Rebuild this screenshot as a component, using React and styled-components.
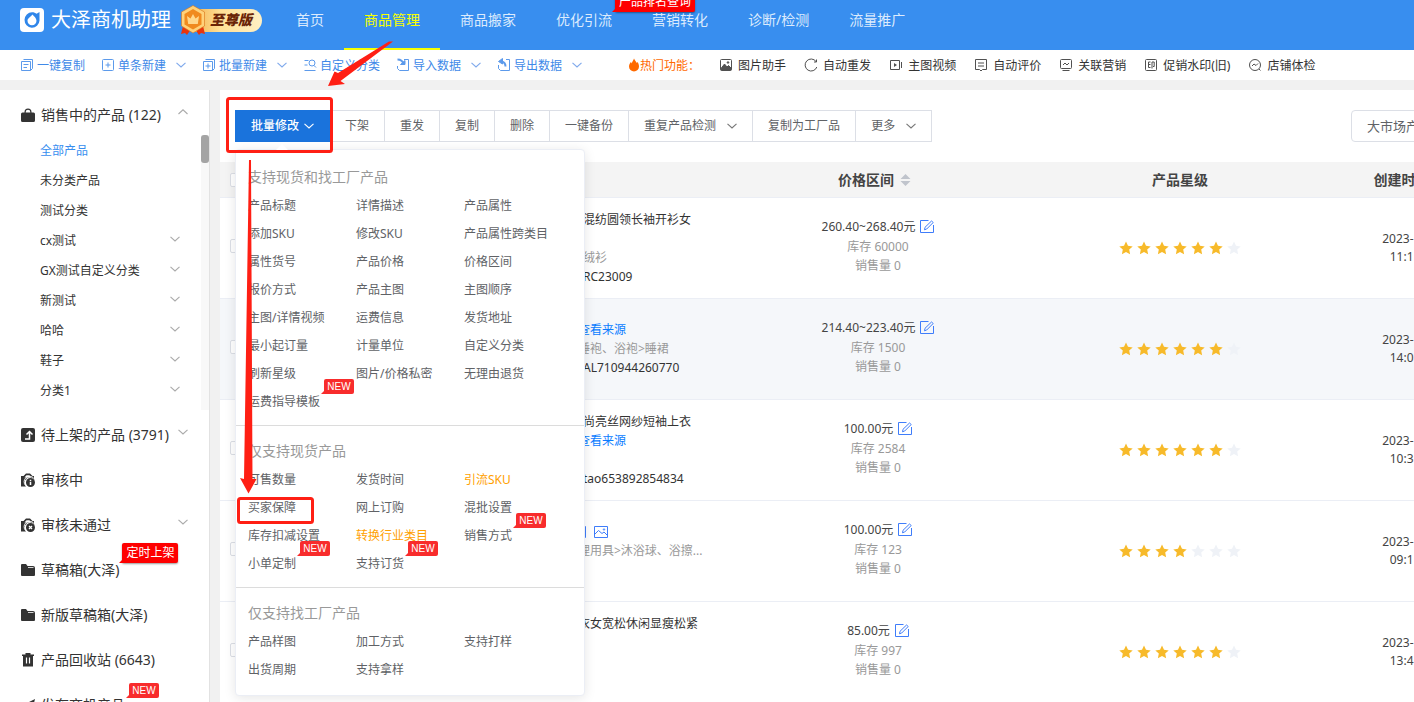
import React from 'react';
import styled, { createGlobalStyle, css } from 'styled-components';

const Global = createGlobalStyle`
  * { box-sizing: border-box; }
  body {
    margin: 0;
    background: #f1f1f1;
    color: #333;
    font: 12px/18px "Noto Sans", "Noto Sans CJK SC", sans-serif;
    overflow: hidden;
  }
  button { font: inherit; color: inherit; background: none; border: 0; padding: 0; cursor: pointer; }
  a { color: inherit; text-decoration: none; }
  ul { list-style: none; margin: 0; padding: 0; }
  svg { display: block; flex: none; }
`;

/* ---------- layout ---------- */

const Page = styled.div`
  position: relative;
  display: flex;
  flex-direction: column;
  height: 100vh;
  overflow: hidden;
`;

const Header = styled.header`
  display: flex;
  align-items: center;
  flex: none;
  height: 50px;
  padding: 0 20px 10px;
  background: #388eef;
  white-space: nowrap;
`;

const Brand = styled.div`
  display: flex;
  align-items: center;
  gap: 7px;
  color: #fff;
  font-size: 20px;
  line-height: 30px;
`;

const Edition = styled.span`
  position: relative;
  display: flex;
  align-items: center;
  width: 70px;
  height: 23px;
  margin-left: 14px;
  padding-left: 18px;
  border-radius: 3px 12px 12px 3px;
  background: linear-gradient(90deg, #f3b14c, #ffdf95 40%, #fff0c4);
  color: #6b2407;
  font-size: 14px;
  font-style: italic;
  font-weight: 900;
  line-height: 20px;
  svg { position: absolute; left: -12px; top: -4px; }
`;

const Nav = styled.nav`
  display: flex;
  align-self: flex-start;
  margin-left: 14px;
`;

const NavLink = styled.a`
  height: 50px;
  padding: 0 20px;
  border-bottom: 2px solid ${p => (p.$active ? '#f6ff00' : 'transparent')};
  color: ${p => (p.$active ? '#f6ff00' : '#dcebfd')};
  font-size: 14px;
  line-height: 40px;
`;

const Tools = styled.div`
  display: flex;
  align-items: center;
  flex: none;
  height: 30px;
  padding: 0 20px;
  background: #fff;
  white-space: nowrap;
`;

const BlueTools = styled.div`
  display: flex;
  gap: 16px;
  color: #4089e8;
`;

const HotTools = styled.div`
  display: flex;
  gap: 18px;
  margin-left: 46px;
`;

const Tool = styled.button`
  display: flex;
  align-items: center;
  height: 30px;
  > svg:first-child { margin-right: ${p => (p.$hot ? 5 : 3)}px; }
  > svg:last-child { margin-left: 10px; }
`;

const ToolText = styled.span`
  padding-top: 2px;
`;

const HotLabel = styled.span`
  display: flex;
  align-items: center;
  width: 73px;
  color: #ff6a00;
`;

const Body = styled.div`
  display: flex;
  flex: 1;
  min-height: 0;
  gap: 10px;
  padding-top: 10px;
`;

/* ---------- sidebar ---------- */

const Side = styled.aside`
  flex: none;
  width: 210px;
  overflow: hidden;
  border-right: 1px solid #e2e2e2;
  background: #fff;
`;

const Group = styled.a`
  display: flex;
  align-items: center;
  height: 45px;
  padding: 5px 21px 0;
  font-size: 14px;
  line-height: 20px;
  white-space: nowrap;
  > svg:first-child { margin-right: 6px; }
  > svg:last-child { margin-left: auto; margin-bottom: 6px; }
`;

const SubPanel = styled.div`
  display: flex;
  height: 275px;
  overflow: hidden;
`;

const SubList = styled.ul`
  flex: 1;
`;

const SubItem = styled.li`
  display: flex;
  align-items: center;
  justify-content: space-between;
  height: 30px;
  padding: 0 21px 0 40px;
  color: ${p => (p.$active ? '#388eef' : '#333')};
  a { padding-top: 2px; }
  svg { margin-bottom: 2px; }
`;

const Track = styled.div`
  width: 8px;
  background: #f8f8f8;
`;

const Thumb = styled.div`
  height: 28px;
  border-radius: 3px;
  background: #a4a4a4;
`;

/* ---------- badges ---------- */

const Anchor = styled.span`
  position: relative;
`;

const badge = css`
  position: absolute;
  left: calc(100% + 4px);
  border-radius: 2px;
  color: #fff;
  font-weight: 400;
  white-space: nowrap;
  &::after {
    content: '';
    position: absolute;
    left: -3px;
    bottom: 0;
    border: 4px solid transparent;
    border-bottom-color: inherit;
  }
`;

const RedBadge = styled.span`
  ${badge}
  left: calc(100% + 3px);
  bottom: 17px;
  padding: 0 4px;
  background: #fe0000;
  border-color: #fe0000;
  box-shadow: 0 1px 2px rgba(0, 0, 0, 0.4);
  font-size: 12px;
  line-height: 20px;
`;

const NewTag = styled.span`
  ${badge}
  bottom: 17px;
  width: 30px;
  background: #f82c2c;
  border-color: #f82c2c;
  font-family: "Liberation Sans", sans-serif;
  font-size: 10px;
  line-height: 15px;
  text-align: center;
`;

/* ---------- main ---------- */

const Main = styled.main`
  position: relative;
  flex: 1;
  min-width: 0;
  overflow: hidden;
  background: #fff;
`;

const Actions = styled.div`
  display: flex;
  justify-content: space-between;
  width: 1280px;
  min-width: 100%;
  padding: 20px 0 20px 15px;
`;

const ButtonGroup = styled.div`
  display: flex;
`;

const Action = styled.button`
  display: flex;
  align-items: center;
  gap: 11px;
  height: 32px;
  padding: 0 15px;
  border: 1px solid #dcdfe6;
  border-left: 0;
  color: #606266;
  white-space: nowrap;
`;

const PrimaryAction = styled(Action)`
  gap: 5px;
  padding: 0 16px;
  border: 0;
  background: #1a73dc;
  color: #fff;
  font-weight: 500;
`;

const MarketButton = styled.button`
  width: 149px;
  height: 32px;
  padding-left: 15px;
  border: 1px solid #dcdfe6;
  border-radius: 4px;
  color: #606266;
  font-size: 13px;
  text-align: left;
`;

const Table = styled.table`
  width: 1276px;
  min-width: 100%;
  table-layout: fixed;
  border-collapse: separate;
  border-spacing: 0;
`;

const Th = styled.th`
  height: 36px;
  padding: 0;
  border-bottom: 1px solid #ebeef5;
  background: #f4f4f4;
  color: #444;
  font-size: 14px;
  line-height: 20px;
  text-align: center;
`;

const HeadCell = styled.span`
  display: flex;
  justify-content: center;
  align-items: center;
  svg { margin: 0 7px 0 6px; }
`;

const Tr = styled.tr`
  background: ${p => (p.$hover ? '#f5f7fa' : '#fff')};
`;

const Td = styled.td`
  height: 101px;
  padding: 0;
  border-bottom: 1px solid #ebeef5;
  color: #444;
  line-height: 18px;
  text-align: ${p => (p.$left ? 'left' : 'center')};
`;

const PriceTd = styled(Td)`
  padding-bottom: 5px;
`;

const CheckTd = styled(Td)`
  padding-bottom: 4px;
`;

const Check = styled.input`
  appearance: none;
  display: block;
  width: 14px;
  height: 14px;
  margin: 0 0 0 10px;
  border: 1px solid #dcdfe6;
  border-radius: 2px;
  background: #fff;
`;

const Line = styled.div`
  display: flex;
  align-items: center;
  gap: 8px;
  height: 19px;
  padding-left: ${p => (p.$indent ? 5 : 0)}px;
  color: ${p => ({ grey: '#999', blue: '#0a7cff' }[p.$tone] || '#333')};
  white-space: nowrap;
`;

const Price = styled.div`
  display: flex;
  align-items: center;
  justify-content: center;
  gap: 5px;
  line-height: 20px;
`;

const Stock = styled.div`
  color: #999;
  line-height: 19px;
`;

const Stars = styled.div`
  display: flex;
  justify-content: center;
  gap: 4px;
`;

/* ---------- popover ---------- */

const Popover = styled.div`
  position: absolute;
  left: 15px;
  top: 59px;
  width: 350px;
  padding: 2px 0;
  border: 1px solid #ebeef5;
  border-radius: 4px;
  background: #fff;
  box-shadow: 0 2px 12px rgba(0, 0, 0, 0.1);
  &::before {
    content: '';
    position: absolute;
    left: 40px;
    top: -12px;
    border: 6px solid transparent;
    border-bottom-color: #fff;
  }
`;

const Section = styled.section`
  padding: 10px 12px 9px;
  & + & { border-top: 1px solid #dcdcdc; }
`;

const SectionTitle = styled.h3`
  margin: 0;
  color: #999;
  font-size: 14px;
  font-weight: 400;
  line-height: 30px;
`;

const Options = styled.ul`
  display: grid;
  grid-template-columns: repeat(3, 108px);
`;

const Option = styled.a`
  position: relative;
  display: inline-block;
  color: ${p => (p.$orange ? '#ffa000' : '#606266')};
  line-height: 28px;
  white-space: nowrap;
  ${NewTag} { bottom: 22px; }
`;

const Marks = styled.svg`
  position: absolute;
  left: 0;
  top: 0;
  pointer-events: none;
`;

/* ---------- icons ---------- */

const Chevron = ({ color = '#9aa3b5', up, width = 10 }) => (
  <svg width={width} height="6" viewBox="0 0 10 6" fill="none" stroke={color} strokeWidth="1.1">
    <path d={up ? 'M.5 5 5 .8 9.5 5' : 'M.5 .8 5 5 9.5 .8'} />
  </svg>
);

const toolPaths = {
  copy: <><path d="M3.5 1.5h9v9l-2 2" /><path d="M1.500 3.500h9v9h-9z" /><path d="M3.500 6.500h5M3.500 9.500h3.500" /></>,
  plus: <><rect x="1.500" y="1.500" width="11" height="11" rx="1" /><path d="M7 4.500v5M4.500 7h5" /></>,
  batch: <><path d="M3.500 1.500h9v9l-2 2" /><path d="M1.500 3.500h9v9h-9z" /><path d="M6 5.500v5M3.500 8h5" /></>,
  sort: <><path d="M1.500 2.500h4M1.500 7h3M1.500 12.500h11" /><circle cx="9" cy="5" r="3" /><path d="m11 7.500 2 2" /></>,
  in: <><path d="M8 1.500h4.500v11h-9l-2-2V8" /><path d="M1.500 1.500C5 1.500 7 3.500 8 6.500" strokeWidth="2" /><path d="M4.500 6.500h4.500v-4z" fill="currentColor" /></>,
  out: <><path d="M9 1.500h3.500v11h-9l-2-2V7" /><path d="M8.500 8.500C8.500 5.500 7 4 4.500 3.500" strokeWidth="2" /><path d="M1.500 3.500 5.500.5v5.500z" fill="currentColor" /></>,
  image: <><rect x="1.500" y="1.500" width="11" height="11" rx="1" /><path d="M2 10.500 5.500 6l2.500 3 1.500-1.500L12 10v2H2z" fill="currentColor" /><circle cx="9" cy="4.500" r=".8" fill="currentColor" /></>,
  reload: <path d="M12 3.500A6 6 0 1 0 12.800 9M12.500 1.500v2.500H10" />,
  video: <><path d="M12.500 4v6M10.500 2.500v9H1.500v-9z" /><path d="M5 5v4l3-2z" fill="currentColor" strokeWidth="0" /></>,
  comment: <><path d="M1.500 1.500h11v10H8.500L7 13l-1.500-1.500h-4z" /><path d="M4 5h6M4 8h6" /></>,
  screen: <><rect x="1.500" y="1.500" width="11" height="9" rx="1" /><path d="M3.500 12.500h7M4 7l2-2 2 2 2-2" /></>,
  stamp: <><rect x="1.500" y="1.500" width="11" height="11" rx="1" /><path d="M6.500 4H4.500v5.500h2M4.500 6.500h2M8 10.500V4h2.200v4.500H9" /></>,
  health: <><circle cx="7" cy="7" r="5.500" /><path d="m4 8 2-2 2 1.500 2-2M11 11l1.500 1.500" /></>,
};

const ToolIcon = ({ name }) => (
  <svg width="14" height="14" viewBox="0 0 14 14" fill="none" stroke="currentColor" strokeWidth="1" opacity=".85">
    {toolPaths[name]}
  </svg>
);

const clipboard = (
  <>
    <path d="M0 3h2.500L5 .5h4L11.500 3H13v3A5.200 5.200 0 0 0 5 13.500H0z" />
    <path d="M3.500 4.500h6L8.500 2.200h-3z" fill="#fff" />
    <circle cx="9.500" cy="9.500" r="4.500" />
    <path d="M4.600 12.500a5.300 5.300 0 0 1 8-7.500" fill="none" stroke="#fff" strokeWidth=".9" />
  </>
);

const sidePaths = {
  bag: <path d="M1.500 4.500h11q1.500 0 1.500 1.500v6.500q0 1.500-1.500 1.500h-11Q0 14 0 12.500V6q0-1.500 1.500-1.500ZM3.500 5V4a3.500 3.500 0 0 1 7 0v1h-1.200V4a2.300 2.300 0 0 0-4.600 0v1Z" />,
  up: <><rect width="14" height="14" rx="2" /><path d="M4 11h4.500V4.500M5.500 6.500 8.500 3.500 11.500 6.500" fill="none" stroke="#fff" strokeWidth="1.500" /></>,
  pending: <>{clipboard}<path d="M9.500 6.800v1.400M9.500 9v3" stroke="#fff" strokeWidth="1.500" /></>,
  failed: <>{clipboard}<path d="m8 8 3 3M11 8l-3 3" stroke="#fff" strokeWidth="1.300" /></>,
  folder: <><path d="M0 2q0-1 1-1h4l1.500 2H12q2 0 2 2v7q0 1-1 1H1q-1 0-1-1z" /><path d="M7 4.500h5.500" stroke="#fff" strokeWidth=".8" /></>,
  trash: <><path d="M4.500 0h5v1.500H13V3H1V1.500h3.500zM2 3h10v10.500H2z" /><path d="M5.500 4.500v6M8.500 4.500v6" stroke="#fff" strokeWidth="1.200" /></>,
  send: <path d="m0 8 14-7-3 12-4-3-2 3-1-4z" />,
};

const SideIcon = ({ name }) => (
  <svg width="14" height="14" viewBox="0 0 14 14" fill="#333">{sidePaths[name]}</svg>
);

const Logo = () => (
  <svg width="24" height="24" viewBox="0 0 24 24">
    <rect width="24" height="24" rx="4" fill="#fff" />
    <path d="M12 4.200c2 0 3.400.6 4.600 1.600L19.500 4v8.500A7.500 7.800 0 1 1 12 4.200Z" fill="#2f86ea" />
    <path d="M12.500 6.500C14 8.500 16.500 10 16.500 12.800a4.500 4.500 0 1 1-9 0c0-2.800 3.500-4 5-6.300Z" fill="#fff" />
  </svg>
);

const Medal = () => (
  <svg width="26" height="31" viewBox="0 0 26 31">
    <path d="m3 21-2 8 4-1 2 2 4-6zM23 21l2 8-4-1-2 2-4-6z" fill="#e8340d" />
    <path d="m13 .5 11.500 6.500v14L13 28 1.500 21V7z" fill="#ffd27a" stroke="#d9741a" strokeWidth=".6" />
    <path d="m13 4 8.500 5v10.500L13 24.500l-8.500-5V9z" fill="#f08a1e" />
    <path d="m7 11 3.500 2.500L13 9l2.500 4.500L19 11l-1.200 8H8.200z" fill="#ffd88c" />
  </svg>
);

const Flame = () => (
  <svg width="12" height="14" viewBox="0 0 12 14">
    <path d="M6 .5C7 3 8.500 4 8.800 5L9.700 4C10.800 6 11 7.500 11 8.500a5 5 0 0 1-10 0c0-2 1-3.500 2-4.500l.8 1.500C4 3.500 5.500 2.500 6 .5Z" fill="#ff6a00" />
  </svg>
);

const Edit = () => (
  <svg width="14" height="14" viewBox="0 0 14 14" fill="none" stroke="#3f7dfa">
    <path d="M8.500 .5h-8v12h13V5" />
    <path d="m4.500 9.800.5-2.500L11.500 1 13.200 2.500l-6.500 6.500z" />
  </svg>
);

const Picture = () => (
  <svg width="14" height="14" viewBox="0 0 14 14" fill="none" stroke="#3f7dfa">
    <path d="M.5 1.500h13v11H.5zM.5 9.500l4-4 3.500 3 2-1.500 3 3" />
    <circle cx="10" cy="4.500" r=".7" />
  </svg>
);

const Device = () => (
  <svg width="8" height="14" viewBox="0 0 8 14" fill="none" stroke="#3f7dfa">
    <path d="M0 1.500h7.500v11H0M0 6h7.500" />
  </svg>
);

const Sorter = () => (
  <svg width="11" height="14" viewBox="0 0 11 14" fill="#c0c4cc">
    <path d="M5.500 1 10.500 6H.5zM5.500 13l5-5H.5z" />
  </svg>
);

const Star = ({ on }) => (
  <svg width="14" height="14" viewBox="0 0 14 14" fill={on ? '#f7ba2a' : '#eff2f7'}>
    <path d="m7 .5 2 4.300 4.700.6-3.500 3.200.9 4.700L7 11l-4.100 2.300.9-4.700L.3 5.400 5 4.800z" />
  </svg>
);

/* ---------- data ---------- */

const navItems = [
  ['首页'], ['商品管理'], ['商品搬家'], ['优化引流', '产品排名查询'], ['营销转化'], ['诊断/检测'], ['流量推广'],
];

const blueTools = [
  ['copy', '一键复制'], ['plus', '单条新建', true], ['batch', '批量新建', true],
  ['sort', '自定义分类'], ['in', '导入数据', true], ['out', '导出数据', true],
];

const hotTools = [
  ['image', '图片助手'], ['reload', '自动重发'], ['video', '主图视频'], ['comment', '自动评价'],
  ['screen', '关联营销'], ['stamp', '促销水印(旧)'], ['health', '店铺体检'],
];

const subItems = [
  ['全部产品'], ['未分类产品'], ['测试分类'], ['cx测试', true], ['GX测试自定义分类', true],
  ['新测试', true], ['哈哈', true], ['鞋子', true], ['分类1', true],
];

const groups = [
  { icon: 'up', text: '待上架的产品 (3791)', arrow: true },
  { icon: 'pending', text: '审核中' },
  { icon: 'failed', text: '审核未通过', arrow: true },
  { icon: 'folder', text: '草稿箱(大泽)', badge: '定时上架' },
  { icon: 'folder', text: '新版草稿箱(大泽)' },
  { icon: 'trash', text: '产品回收站 (6643)' },
  { icon: 'send', text: '发布商机产品', isNew: true },
];

const actions = [
  ['下架'], ['重发'], ['复制'], ['删除'], ['一键备份'], ['重复产品检测', true], ['复制为工厂品'], ['更多', true],
];

const sections = [
  ['支持现货和找工厂产品', [
    '产品标题', '详情描述', '产品属性', '添加SKU', '修改SKU', '产品属性跨类目', '属性货号', '产品价格', '价格区间',
    '报价方式', '产品主图', '主图顺序', '主图/详情视频', '运费信息', '发货地址', '最小起订量', '计量单位', '自定义分类',
    '刷新星级', '图片/价格私密', '无理由退货', '运费指导模板',
  ]],
  ['仅支持现货产品', [
    '可售数量', '发货时间', '引流SKU', '买家保障', '网上订购', '混批设置', '库存扣减设置', '转换行业类目', '销售方式',
    '小单定制', '支持订货',
  ]],
  ['仅支持找工厂产品', ['产品样图', '加工方式', '支持打样', '出货周期', '支持拿样']],
];
const newOptions = ['运费指导模板', '销售方式', '小单定制', '支持订货'];
const orangeOptions = ['引流SKU', '转换行业类目'];

const rows = [
  {
    lines: [{ text: '混纺圆领长袖开衫女', indent: true }, {}, { text: '绒衫', tone: 'grey', indent: true }, { text: 'RC23009', indent: true }],
    price: '260.40~268.40元', stock: 60000, stars: 6, time: '11:11:11',
  },
  {
    hover: true,
    lines: [{ text: '查看来源', tone: 'blue' }, { text: '睡袍、浴袍>睡裙', tone: 'grey' }, { text: 'AL710944260770', indent: true }],
    price: '214.40~223.40元', stock: 1500, stars: 6, time: '14:01:11',
  },
  {
    lines: [{ text: '尚亮丝网纱短袖上衣', indent: true }, { text: '查看来源', tone: 'blue' }, {}, { text: 'tao653892854834', indent: true }],
    price: '100.00元', stock: 2584, stars: 6, time: '10:31:11',
  },
  {
    lines: [{ icons: true }, { text: '理用具>沐浴球、浴擦...', tone: 'grey' }, {}],
    price: '100.00元', stock: 123, stars: 4, time: '09:11:11',
  },
  {
    lines: [{ text: '衣女宽松休闲显瘦松紧' }, {}, {}, {}],
    price: '85.00元', stock: 997, stars: 6, time: '13:41:11',
  },
];

/* ---------- parts ---------- */

function ProductRow({ row, index }) {
  return (
    <Tr $hover={row.hover}>
      <CheckTd $left><Check type="checkbox" aria-label={`选择第${index + 1}行`} /></CheckTd>
      <Td />
      <Td $left>
        {row.lines.map((l, i) => (
          <Line key={i} $tone={l.tone} $indent={l.indent}>
            {l.icons ? <><Device /><Picture /></> : l.tone === 'blue' ? <a href="#source">{l.text}</a> : l.text}
          </Line>
        ))}
      </Td>
      <PriceTd>
        <Price>{row.price}<Edit /></Price>
        <Stock>库存 {row.stock}</Stock>
        <Stock>销售量 0</Stock>
      </PriceTd>
      <Td>
        <Stars>{[0, 1, 2, 3, 4, 5, 6].map(i => <Star key={i} on={i < row.stars} />)}</Stars>
      </Td>
      <Td>2023-11-11<br />{row.time}</Td>
    </Tr>
  );
}

export default function App() {
  return (
    <Page>
      <Global />
      <Header>
        <Brand>
          <Logo />
          大泽商机助理
          <Edition><Medal />至尊版</Edition>
        </Brand>
        <Nav>
          {navItems.map(([text, tip]) => (
            <NavLink key={text} href="#nav" $active={text === '商品管理'}>
              <Anchor>{text}{tip && <RedBadge>{tip}</RedBadge>}</Anchor>
            </NavLink>
          ))}
        </Nav>
      </Header>

      <Tools>
        <BlueTools>
          {blueTools.map(([icon, text, drop]) => (
            <Tool key={text}>
              <ToolIcon name={icon} />
              <ToolText>{text}</ToolText>
              {drop && <Chevron color="#7fa9ec" />}
            </Tool>
          ))}
        </BlueTools>
        <HotTools>
          <HotLabel><Flame /><ToolText>热门功能：</ToolText></HotLabel>
          {hotTools.map(([icon, text]) => (
            <Tool key={text} $hot><ToolIcon name={icon} /><ToolText>{text}</ToolText></Tool>
          ))}
        </HotTools>
      </Tools>

      <Body>
        <Side>
          <Group href="#selling"><SideIcon name="bag" />销售中的产品 (122)<Chevron up color="#aaa" /></Group>
          <SubPanel>
            <SubList>
              {subItems.map(([text, drop], i) => (
                <SubItem key={text} $active={i === 0}><a href="#category">{text}</a>{drop && <Chevron color="#aaa" />}</SubItem>
              ))}
            </SubList>
            <Track><Thumb /></Track>
          </SubPanel>
          {groups.map(g => (
            <Group key={g.text} href="#group">
              <SideIcon name={g.icon} />
              <Anchor>
                {g.text}
                {g.badge && <RedBadge>{g.badge}</RedBadge>}
                {g.isNew && <NewTag>NEW</NewTag>}
              </Anchor>
              {g.arrow && <Chevron color="#aaa" />}
            </Group>
          ))}
        </Side>

        <Main>
          <Actions>
            <ButtonGroup>
              <PrimaryAction>批量修改<Chevron color="#fff" /></PrimaryAction>
              {actions.map(([text, drop]) => (
                <Action key={text}>{text}{drop && <Chevron color="#777" />}</Action>
              ))}
            </ButtonGroup>
            <MarketButton>大市场产品</MarketButton>
          </Actions>

          <Table>
            <colgroup>
              <col style={{ width: 30 }} />
              <col style={{ width: 328 }} />
              <col style={{ width: 149 }} />
              <col style={{ width: 302 }} />
              <col style={{ width: 302 }} />
              <col />
            </colgroup>
            <thead>
              <tr>
                <Th><Check type="checkbox" aria-label="全选" /></Th>
                <Th />
                <Th />
                <Th><HeadCell>价格区间<Sorter /></HeadCell></Th>
                <Th>产品星级</Th>
                <Th><HeadCell>创建时间<Sorter /></HeadCell></Th>
              </tr>
            </thead>
            <tbody>
              {rows.map((row, i) => <ProductRow key={i} row={row} index={i} />)}
            </tbody>
          </Table>

          <Popover>
            {sections.map(([title, options]) => (
              <Section key={title}>
                <SectionTitle>{title}</SectionTitle>
                <Options>
                  {options.map(o => (
                    <li key={o}>
                      <Option href="#option" $orange={orangeOptions.includes(o)}>
                        {o}{newOptions.includes(o) && <NewTag>NEW</NewTag>}
                      </Option>
                    </li>
                  ))}
                </Options>
              </Section>
            ))}
          </Popover>
        </Main>
      </Body>

      <Marks width="400" height="530" viewBox="0 0 400 530">
        <g fill="none" stroke="#ff1f14" strokeWidth="3">
          <rect x="227.500" y="98.500" width="104" height="53" rx="2" />
          <rect x="238.500" y="498.500" width="74" height="24" rx="2" />
        </g>
        <g fill="#ff1f14">
          <path d="M328 86 334.500 71.500 338 73 389 41.500 393 41.500 340.500 81 345 84z" />
          <path d="M249 160h2l1.500 319h4L248.500 493.500 240 478l4 1z" />
        </g>
      </Marks>
    </Page>
  );
}
